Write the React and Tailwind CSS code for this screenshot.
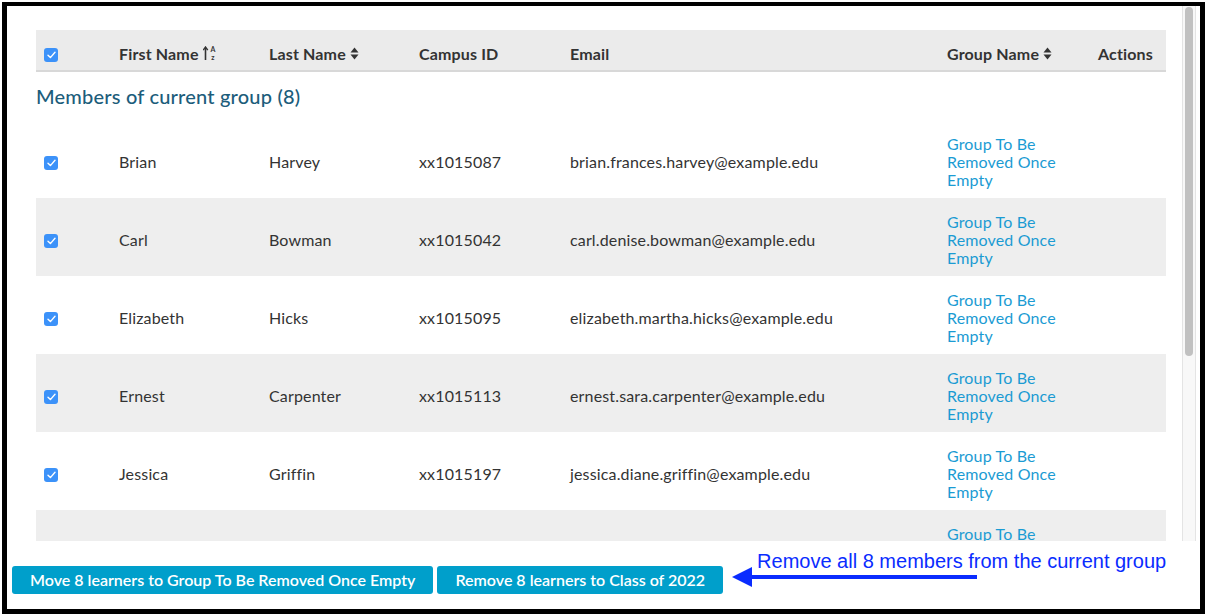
import React from "react";

const members = [
  { first: "Brian", last: "Harvey", id: "xx1015087", email: "brian.frances.harvey@example.edu" },
  { first: "Carl", last: "Bowman", id: "xx1015042", email: "carl.denise.bowman@example.edu" },
  { first: "Elizabeth", last: "Hicks", id: "xx1015095", email: "elizabeth.martha.hicks@example.edu" },
  { first: "Ernest", last: "Carpenter", id: "xx1015113", email: "ernest.sara.carpenter@example.edu" },
  { first: "Jessica", last: "Griffin", id: "xx1015197", email: "jessica.diane.griffin@example.edu" },
  { first: "", last: "", id: "", email: "" },
];

const cols = "grid grid-cols-[75px_150px_150px_151px_377px_151px_76px]";

function Check() {
  return (
    <span className="flex h-[14px] w-[14px] items-center justify-center rounded-[3px] bg-[#3c92f9]">
      <svg width="9" height="8" viewBox="0 0 9 8" fill="none">
        <path d="M1 4.2 L3.4 6.6 L8 1.2" stroke="white" strokeWidth="1.4" strokeLinecap="round" strokeLinejoin="round" />
      </svg>
    </span>
  );
}

function SortBoth() {
  return (
    <svg width="9" height="13" viewBox="0 0 9 13" className="ml-[4px]">
      <path d="M4.5 0.5 L8.5 5.5 L0.5 5.5 Z" fill="#333" />
      <path d="M4.5 12.5 L8.5 7.5 L0.5 7.5 Z" fill="#333" />
    </svg>
  );
}

function SortAlpha() {
  return (
    <svg width="14" height="15" viewBox="0 0 14 15" className="ml-[4px]">
      <path d="M2.5 14 L2.5 2" stroke="#333" strokeWidth="1.6" />
      <path d="M0.2 4.2 L2.5 1 L4.8 4.2" stroke="#333" strokeWidth="1.4" fill="none" />
      <text x="10" y="6" fontSize="7" fontWeight="700" textAnchor="middle" fill="#333" fontFamily="Lato, sans-serif">A</text>
      <text x="10" y="14" fontSize="7" fontWeight="700" textAnchor="middle" fill="#333" fontFamily="Lato, sans-serif">z</text>
    </svg>
  );
}

function GroupLink() {
  return (
    <a href="#" className="block text-[16px] leading-[18px] text-[#1b9bd3]">
      Group To Be
      <br />
      Removed Once
      <br />
      Empty
    </a>
  );
}

export default function App() {
  return (
    <div className="h-[616px] w-[1207px] bg-white p-[2px] font-['Lato',sans-serif] text-[#333]">
      <div className="flex h-[612px] flex-col border-[5px] border-t-4 border-black">
        {/* scroll area */}
        <div className="flex h-[535px] overflow-hidden">
          <div className="w-[1175px] shrink-0 pl-[29px] pt-[24px]">
            <div className="w-[1130px] tracking-[0.15px]">
              {/* header */}
              <div className={`${cols} h-[42px] items-center border-b-2 border-[#d8d8d8] bg-[#ebebeb] pt-[7px] text-[16px] font-bold`}>
                <div className="pl-[8px] pt-[2px]">
                  <Check />
                </div>
                <div className="flex items-center pl-[8px]">
                  First Name
                  <SortAlpha />
                </div>
                <div className="flex items-center pl-[8px]">
                  Last Name
                  <SortBoth />
                </div>
                <div className="pl-[8px]">Campus ID</div>
                <div className="pl-[8px]">Email</div>
                <div className="flex items-center pl-[8px]">
                  Group Name
                  <SortBoth />
                </div>
                <div className="pl-[8px]">Actions</div>
              </div>

              <div className="flex h-[48px] items-center text-[20px] font-medium tracking-[0.2px] text-[#1c5d7b]">
                Members of current group (8)
              </div>

              {members.map((m, i) => (
                <div
                  key={i}
                  className={`${cols} h-[78px] items-center pt-[6px] text-[16px] ${i % 2 === 1 ? "bg-[#eeeeee]" : "bg-white"}`}
                >
                  <div className="pl-[8px] pt-[2px]">{m.first && <Check />}</div>
                  <div className="pl-[8px]">{m.first}</div>
                  <div className="pl-[8px]">{m.last}</div>
                  <div className="pl-[8px]">{m.id}</div>
                  <div className="pl-[8px]">{m.email}</div>
                  <div className="pl-[8px]">
                    <GroupLink />
                  </div>
                  <div className="pl-[8px]"></div>
                </div>
              ))}
            </div>
          </div>

          {/* scrollbar */}
          <div className="mt-[-1px] flex h-[536px] w-[14px] justify-center border-x border-[#e4e4e4] bg-[#f8f8f8] pt-[2px]">
            <div className="h-[349px] w-[8px] rounded-full bg-[#c1c1c1]"></div>
          </div>
        </div>

        {/* footer actions */}
        <div className="flex items-start pl-[5px] pt-[25px]">
          <button className="h-[28px] rounded-[3px] bg-[#009fcb] px-[18px] text-[16px] font-semibold text-white">
            Move 8 learners to Group To Be Removed Once Empty
          </button>
          <button className="ml-[4px] h-[28px] rounded-[3px] bg-[#009fcb] px-[18px] text-[16px] font-semibold text-white">
            Remove 8 learners to Class of 2022
          </button>
          <div className="ml-[9px] mt-[-17px] flex flex-col">
            <div className="pl-[25px] font-['Liberation_Sans',Arial,sans-serif] text-[20px] leading-[24px] text-[#0a2cff]">
              Remove all 8 members from the current group
            </div>
            <svg width="246" height="20" viewBox="0 0 246 20" className="mt-[-6px]">
              <path d="M0 10 L20 0 L20 20 Z" fill="#0a2cff" />
              <rect x="16" y="8" width="229" height="4" fill="#0a2cff" />
            </svg>
          </div>
        </div>
      </div>
    </div>
  );
}
